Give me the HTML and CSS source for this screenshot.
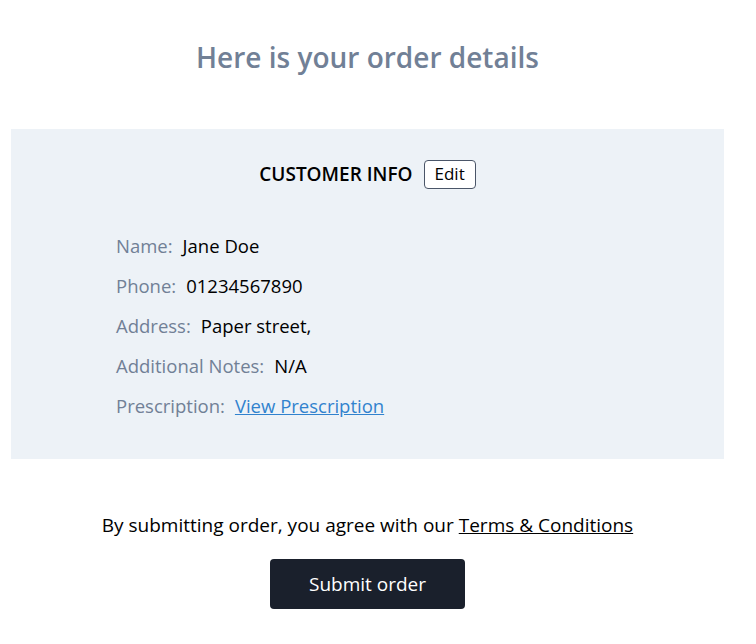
FILE: index.html
```html
<!DOCTYPE html>
<html lang="en">
<head>
<meta charset="utf-8">
<title>Order details</title>
<link rel="stylesheet" href="styles.css">
</head>
<body>
<main class="page">
  <h1 class="title">Here is your order details</h1>
  <section class="panel">
    <div class="panel-head">
      <h2 class="panel-title">CUSTOMER INFO</h2>
      <button class="edit-btn" type="button">Edit</button>
    </div>
    <dl class="info">
      <div class="row"><dt>Name:</dt><dd>Jane Doe</dd></div>
      <div class="row"><dt>Phone:</dt><dd>01234567890</dd></div>
      <div class="row"><dt>Address:</dt><dd>Paper street,</dd></div>
      <div class="row"><dt>Additional Notes:</dt><dd>N/A</dd></div>
      <div class="row"><dt>Prescription:</dt><dd><a class="link" href="#">View Prescription</a></dd></div>
    </dl>
  </section>
  <p class="terms">By submitting order, you agree with our <a class="terms-link" href="#">Terms &amp; Conditions</a></p>
  <div class="actions">
    <button class="submit-btn" type="button">Submit order</button>
  </div>
</main>
</body>
</html>
```
FILE: styles.css
```css
* { box-sizing: border-box; }
body {
  margin: 0;
  font-family: "Open Sans", "Noto Sans", sans-serif;
  color: #000;
  background: #fff;
}
.page {
  width: 713px;
  margin-left: 11px;
  padding-top: 37px;
}
.title {
  margin: 0;
  text-align: center;
  font-size: 28px;
  line-height: 40px;
  font-weight: 600;
  color: #718096;
}
.panel {
  margin-top: 52px;
  height: 330px;
  background: #edf2f7;
  padding-top: 30px;
}
.panel-head {
  display: flex;
  justify-content: center;
  align-items: center;
  gap: 11px;
}
.panel-title {
  margin: 0;
  font-size: 19px;
  font-weight: 600;
  line-height: 30px;
}
.edit-btn {
  font-family: inherit;
  font-size: 17px;
  line-height: 20px;
  padding: 3px 10px;
  background: #fff;
  color: #000;
  border: 1px solid #4a5568;
  border-radius: 4px;
  height: 29px;
}
.info {
  margin: 36px 0 0 105px;
  display: flex;
  flex-direction: column;
}
.row {
  display: flex;
  gap: 10px;
  height: 40px;
  align-items: center;
  font-size: 18.5px;
}
dt { color: #718096; }
dd { margin: 0; color: #000; }
.link { color: #3182ce; }
.terms {
  margin: 52px 0 0;
  text-align: center;
  font-size: 19px;
  line-height: 28px;
}
.terms-link { color: #000; }
.actions {
  display: flex;
  justify-content: center;
  margin-top: 20px;
}
.submit-btn {
  width: 195px;
  height: 50px;
  border: 0;
  border-radius: 4px;
  background: #1a202c;
  color: #fff;
  font-family: inherit;
  font-size: 19px;
}
```
